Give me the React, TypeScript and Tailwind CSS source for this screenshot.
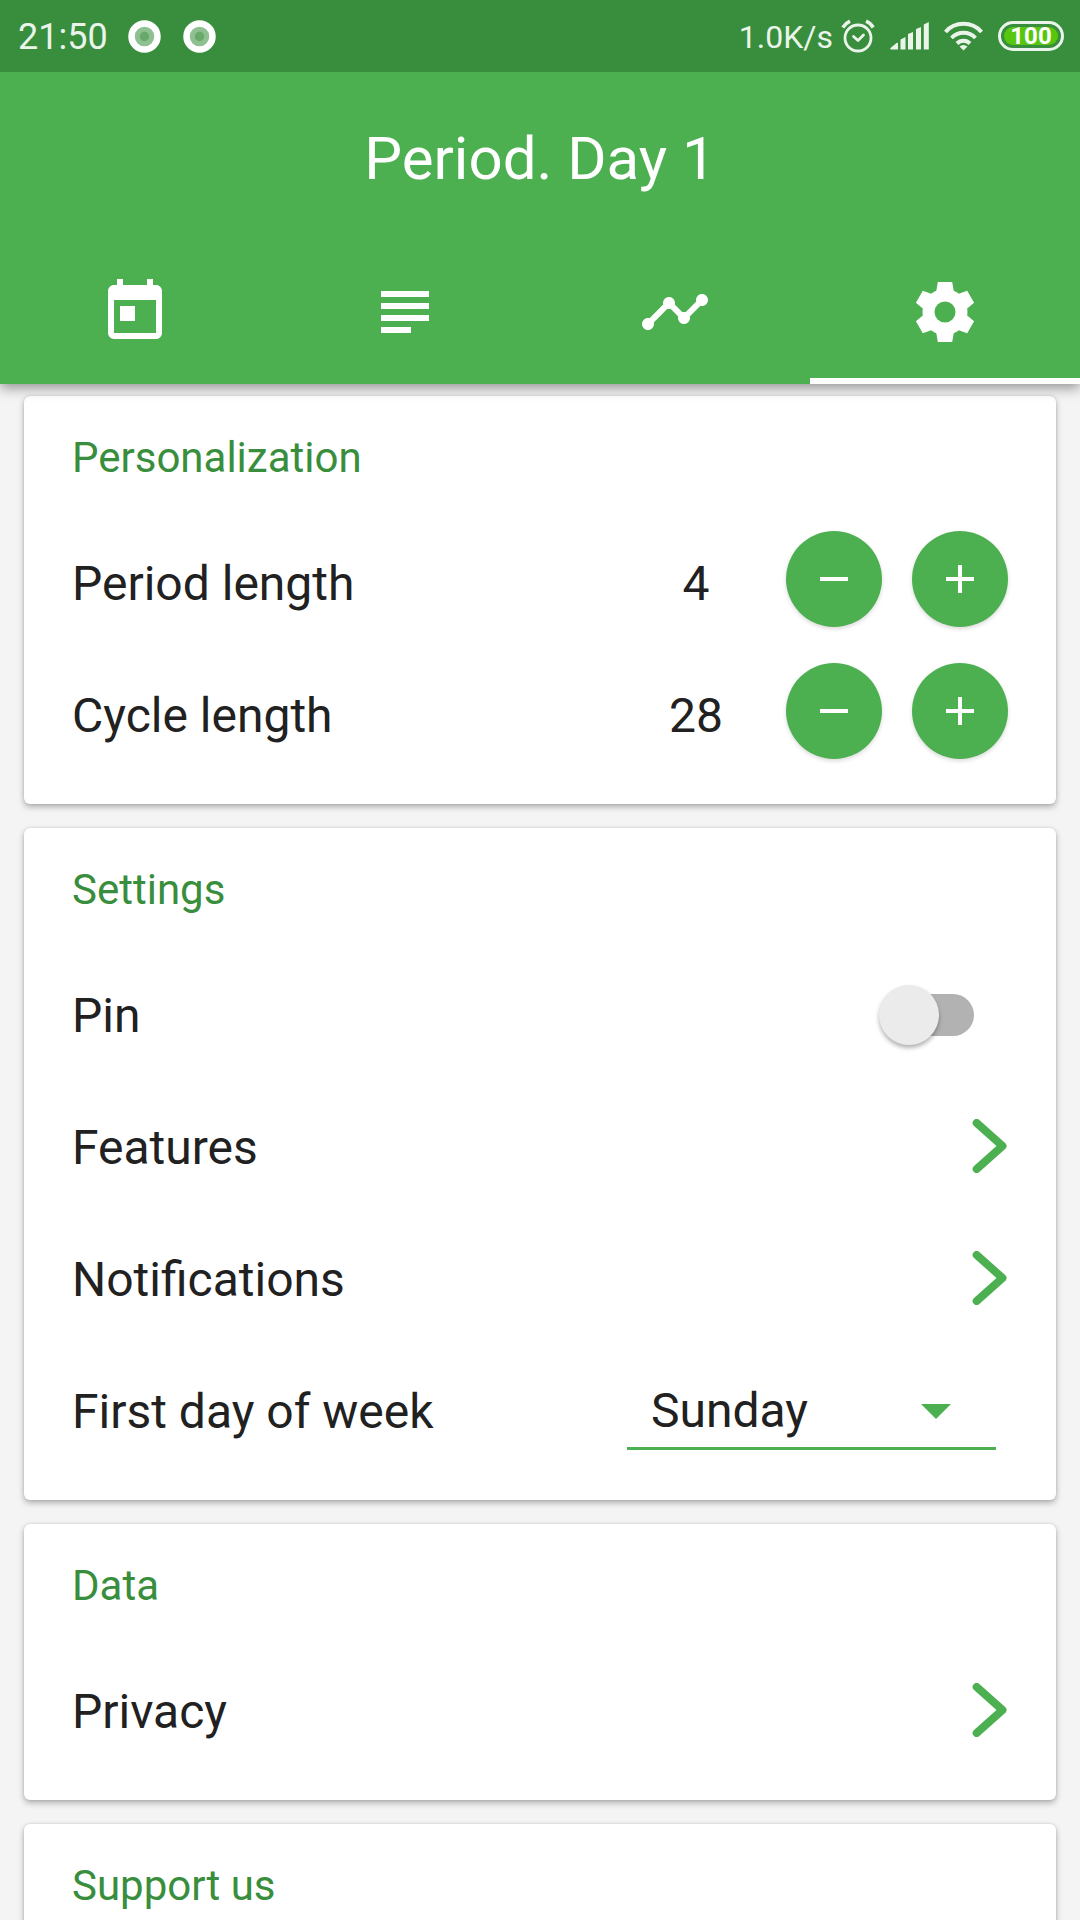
import { useState, type ReactNode } from "react";
import { MdSubject, MdTimeline, MdToday } from "react-icons/md";

const WEEK_DAYS = ["Sunday", "Monday", "Saturday"];

function GearIcon() {
  return (
    <svg viewBox="-12 -12 24 24" className="size-[72px]" fill="currentColor" aria-hidden="true">
      <path
        fillRule="evenodd"
        d="M-2.4-10H2.4L2.9-7.1Q3.8-6.8 4.6-6.1L7.4-7.1L9.7-3.1L7.4-1.2Q7.6 0 7.4 1.2L9.7 3.1L7.4 7.1L4.6 6.1Q3.8 6.8 2.9 7.1L2.4 10H-2.4L-2.9 7.1Q-3.8 6.8-4.6 6.1L-7.4 7.1L-9.7 3.1L-7.4 1.2Q-7.6 0-7.4-1.2L-9.7-3.1L-7.4-7.1L-4.6-6.1Q-3.8-6.8-2.9-7.1ZM0-3.5A3.5 3.5 0 1 0 0 3.5A3.5 3.5 0 1 0 0-3.5Z"
      />
    </svg>
  );
}

function RecordDot() {
  return (
    <svg viewBox="0 0 33 33" className="size-[33px]" aria-hidden="true">
      <circle cx="16.5" cy="16.5" r="13" fill="#8fc091" stroke="#fff" strokeWidth="6.5" />
      <circle cx="16.5" cy="16.5" r="4.7" fill="#68a96b" />
    </svg>
  );
}

function AlarmIcon() {
  return (
    <svg viewBox="0 0 34 34" className="size-[34px]" fill="none" stroke="currentColor" aria-hidden="true">
      <circle cx="17" cy="19" r="13" strokeWidth="2.8" />
      <path d="M12.5 17.5L17 21.5L22.5 16" strokeWidth="2.8" strokeLinecap="round" strokeLinejoin="round" />
      <path d="M1.8 8.5Q5 4 9 2.2M25 2.2Q29.5 4 32.2 8.5" strokeWidth="3.6" />
    </svg>
  );
}

function SignalIcon() {
  return (
    <svg viewBox="0 0 39 28" className="h-7 w-[39px]" fill="currentColor" aria-hidden="true">
      <path d="M1 27.5Q-.5 27 .8 25.8L6.500 21Q8 20.2 8 22V27.5Z" />
      <path d="M10.5 17.5L15.5 15V27.5H10.5ZM18 12L23 10V27.5H18ZM26 7L31 5V27.5H26ZM33.8 2.5L38.8 0V27.5H33.8Z" />
    </svg>
  );
}

function WifiIcon() {
  return (
    <svg viewBox="0 0 39 30" className="h-[30px] w-[39px]" fill="none" stroke="currentColor" strokeWidth="4" aria-hidden="true">
      <path d="M1.5 11A24 24 0 0 1 37.5 11" />
      <path d="M7.5 17A16.5 16.5 0 0 1 31.5 17" />
      <path d="M13 22.5A9 9 0 0 1 26 22.5" />
      <path d="M15.5 25.5Q19.5 22.5 23.5 25.5L19.5 29.5Z" fill="currentColor" stroke="none" />
    </svg>
  );
}

function StatusBar() {
  return (
    <div className="flex h-[72px] items-center justify-between bg-[#388e3c] pr-4 pl-[18px] text-[#eaf4ea]">
      <div className="flex items-center">
        <span className="mr-5 pt-0.5 text-[36px] leading-10">21:50</span>
        <div className="flex gap-[22px]">
          <RecordDot />
          <RecordDot />
        </div>
      </div>
      <div className="flex items-center gap-[15px]">
        <div className="flex items-center gap-2">
          <span className="pt-0.5 text-[32px] leading-10">1.0K/s</span>
          <AlarmIcon />
        </div>
        <SignalIcon />
        <WifiIcon />
        <div className="flex h-[30px] w-[66px] rounded-full border-[3px] border-current p-[3px]">
          <span className="flex flex-1 items-center justify-center rounded-full bg-[#57c60f] text-[24px] leading-5 font-bold text-white">
            100
          </span>
        </div>
      </div>
    </div>
  );
}

const TABS = [
  { id: "calendar", label: "Calendar", icon: <MdToday className="size-[72px]" /> },
  { id: "notes", label: "Notes", icon: <MdSubject className="size-[72px]" /> },
  { id: "charts", label: "Charts", icon: <MdTimeline className="size-[72px]" /> },
  { id: "settings", label: "Settings", icon: <GearIcon /> },
];

function Card({ title, children }: { title: string; children?: ReactNode }) {
  return (
    <section className="rounded-md bg-white px-12 pt-9 pb-[27px] shadow-[0_3px_6px_rgba(0,0,0,0.28),0_0_3px_rgba(0,0,0,0.12)]">
      <h2 className="mb-[29px] text-[42px] leading-[52px] text-[#388e3c]">{title}</h2>
      {children}
    </section>
  );
}

const ROW = "flex h-[132px] items-center justify-between pt-2.5 text-[48px] leading-[56px]";

function RoundButton({ label, plus, onClick }: { label: string; plus?: boolean; onClick: () => void }) {
  return (
    <button
      type="button"
      aria-label={label}
      onClick={onClick}
      className="flex size-24 items-center justify-center rounded-full bg-[#4caf50] text-white shadow-[0_2px_4px_rgba(0,0,0,0.15)]"
    >
      <svg viewBox="0 0 28 28" className="size-7" stroke="currentColor" strokeWidth="4" aria-hidden="true">
        <path d={plus ? "M0 14H28M14 0V28" : "M0 14H28"} />
      </svg>
    </button>
  );
}

function StepperRow({ label, initial }: { label: string; initial: number }) {
  const [value, setValue] = useState(initial);

  return (
    <div className={ROW}>
      <span>{label}</span>
      <div className="flex items-center">
        <output className="w-[180px] text-center">{value}</output>
        <div className="flex gap-[30px] pb-2.5">
          <RoundButton label={`Decrease ${label}`} onClick={() => setValue((v) => Math.max(1, v - 1))} />
          <RoundButton label={`Increase ${label}`} plus onClick={() => setValue((v) => v + 1)} />
        </div>
      </div>
    </div>
  );
}

function LinkRow({ label, href }: { label: string; href: string }) {
  return (
    <a href={href} className={ROW}>
      {label}
      <svg
        viewBox="0 0 36 54"
        className="mb-1 h-[54px] w-9"
        fill="none"
        stroke="#4caf50"
        strokeWidth="8"
        strokeLinecap="round"
        strokeLinejoin="round"
        aria-hidden="true"
      >
        <path d="M4.7 4L30.5 27L4.7 50" />
      </svg>
    </a>
  );
}

export default function App() {
  const [tab, setTab] = useState("settings");
  const [pin, setPin] = useState(false);
  const [firstDay, setFirstDay] = useState("Sunday");

  return (
    <div className="flex h-screen flex-col bg-[#f4f4f4] font-[Roboto,sans-serif] text-[#212121]">
      <header className="relative z-10 bg-[#4caf50] text-white shadow-[0_4px_12px_rgba(0,0,0,0.4)]">
        <StatusBar />
        <h1 className="flex h-[168px] items-center justify-center pt-1.5 text-[60px]">Period. Day 1</h1>
        <nav className="grid grid-cols-4">
          {TABS.map((t) => (
            <button
              key={t.id}
              type="button"
              aria-label={t.label}
              onClick={() => setTab(t.id)}
              className={`flex h-36 items-center justify-center border-b-[6px] pt-1.5 ${
                tab === t.id ? "border-white" : "border-transparent"
              }`}
            >
              {t.icon}
            </button>
          ))}
        </nav>
      </header>

      <main className="flex-1 space-y-6 overflow-y-auto px-6 pt-3 pb-6 [scrollbar-width:none]">
        <Card title="Personalization">
          <StepperRow label="Period length" initial={4} />
          <StepperRow label="Cycle length" initial={28} />
        </Card>

        <Card title="Settings">
          <div className={ROW}>
            <label htmlFor="pin">Pin</label>
            <input
              id="pin"
              type="checkbox"
              role="switch"
              checked={pin}
              onChange={(e) => setPin(e.target.checked)}
              className="relative mr-[34px] mb-0.5 h-[42px] w-[90px] appearance-none rounded-full bg-[#b2b2b2] before:absolute before:-top-[9px] before:-left-[5px] before:size-[60px] before:rounded-full before:bg-[#ebebeb] before:shadow-[0_3px_4px_rgba(0,0,0,0.3)] checked:bg-[#a5d6a7] checked:before:left-9 checked:before:bg-[#4caf50]"
            />
          </div>
          <LinkRow label="Features" href="#features" />
          <LinkRow label="Notifications" href="#notifications" />
          <div className={ROW}>
            <label htmlFor="first-day">First day of week</label>
            <div className="relative mr-3 mb-0.5 w-[369px]">
              <select
                id="first-day"
                value={firstDay}
                onChange={(e) => setFirstDay(e.target.value)}
                className="h-[78px] w-full appearance-none border-b-[3px] border-[#4caf50] bg-transparent pt-0.5 pl-6"
              >
                {WEEK_DAYS.map((d) => (
                  <option key={d}>{d}</option>
                ))}
              </select>
              <svg
                viewBox="0 0 30 15"
                className="pointer-events-none absolute top-8 right-[45px] w-[30px]"
                fill="#4caf50"
                aria-hidden="true"
              >
                <path d="M0 0H30L15 15Z" />
              </svg>
            </div>
          </div>
        </Card>

        <Card title="Data">
          <LinkRow label="Privacy" href="#privacy" />
        </Card>

        <Card title="Support us" />
      </main>
    </div>
  );
}
